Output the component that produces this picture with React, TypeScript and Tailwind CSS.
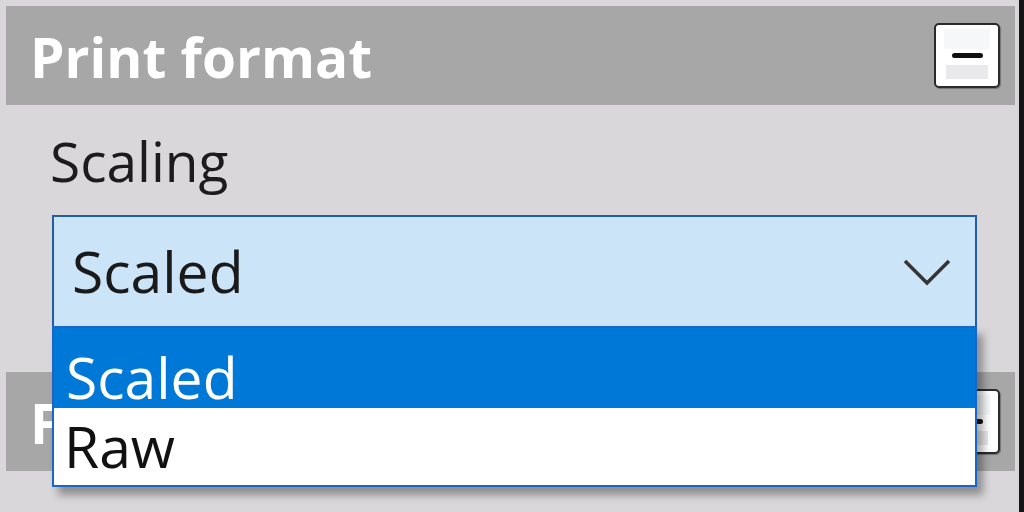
import React from 'react';

const font = { fontFamily: '"Open Sans", "Noto Sans", sans-serif' };

const CollapseButton: React.FC = () => (
  <div className="w-[66px] h-[65px] rounded-[5px] border-2 border-[#2a2a2a] bg-white p-[4px] shadow-[1px_1px_1px_rgba(0,0,0,0.3)]">
    <div className="w-full h-full flex flex-col">
      <div className="h-[20px] mx-[4px] bg-[#f6f7f9]" />
      <div className="h-[12px] flex items-center justify-center">
        <div className="w-[31px] h-[5px] rounded-full bg-[#111]" />
      </div>
      <div className="h-[4px]" />
      <div className="h-[14px] mx-[6px] bg-[#e9e9eb]" />
      <div className="flex-1 bg-white" />
    </div>
  </div>
);

const SectionHeader: React.FC<{ title: string }> = ({ title }) => (
  <div className="h-[99px] bg-[#a7a7a7] flex items-center justify-between pl-[24px] pr-[15px]">
    <span className="text-[55px] leading-none font-bold text-white mt-[2px]">{title}</span>
    <CollapseButton />
  </div>
);

export default function App() {
  return (
    <div
      className="w-[1024px] h-[512px] overflow-hidden bg-[#d9d7da] pt-[6px] pl-[6px] pr-[4px] border-r-[5px] border-[#151515]"
      style={font}
    >
      <SectionHeader title="Print format" />
      <div className="pl-[46px] pr-[38px]">
        <div className="text-[55px] leading-[64px] text-[#1c1c1c] mt-[24px] ml-[-2px]">Scaling</div>
        <div className="relative mt-[22px]">
          <div className="h-[113px] border-2 border-[#1f5ea8] bg-[#cce4f7] flex items-center justify-between pl-[18px] pr-[24px]">
            <span className="text-[57px] leading-none text-[#1a1a1a]">Scaled</span>
            <svg width="48" height="28" viewBox="0 0 48 28" fill="none">
              <path d="M2 3 L24 25 L46 3" stroke="#353535" strokeWidth="3.5" />
            </svg>
          </div>
          <div className="absolute left-0 right-0 top-[111px] z-10 border-2 border-[#1866c6] bg-white shadow-[6px_8px_8px_rgba(0,0,0,0.35)]">
            <div className="h-[80px] bg-[#0078d7] flex items-end pl-[12px] pb-[2px]">
              <span className="text-[57px] leading-none text-white">Scaled</span>
            </div>
            <div className="h-[77px] bg-white flex items-center pl-[10px]">
              <span className="text-[57px] leading-none text-[#111]">Raw</span>
            </div>
          </div>
        </div>
      </div>
      <div className="mt-[44px]">
        <SectionHeader title="Font" />
      </div>
    </div>
  );
}
